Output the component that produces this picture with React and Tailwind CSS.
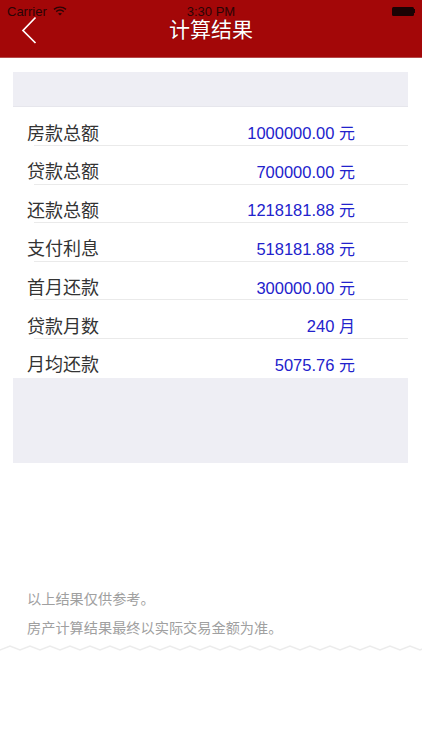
const rows = [
  ["房款总额", "1000000.00", "元"],
  ["贷款总额", "700000.00", "元"],
  ["还款总额", "1218181.88", "元"],
  ["支付利息", "518181.88", "元"],
  ["首月还款", "300000.00", "元"],
  ["贷款月数", "240", "月"],
  ["月均还款", "5075.76", "元"],
];

function Wave() {
  const pts = [];
  for (let x = -10, i = 0; x <= 432; x += 10, i++) pts.push(`${x},${i % 2 ? 6 : 2}`);
  return (
    <svg width="422" height="8" className="block">
      <polyline points={pts.join(" ")} fill="none" stroke="#ececec" strokeWidth="1.6" />
    </svg>
  );
}

export default function App() {
  return (
    <div className="w-[422px] h-[750px] bg-white flex flex-col overflow-hidden font-['Liberation_Sans','Noto_Sans_CJK_SC',sans-serif]">
      <header className="h-[58px] bg-[#a30708] relative shrink-0 border-b border-[#b54a4a]">
        <div className="h-[21px] pt-px px-[7px] flex items-center justify-between text-[13px] leading-none text-[#2a0506] relative">
          <div className="flex items-center gap-[6px]">
            <span>Carrier</span>
            <svg width="14" height="10" viewBox="0 0 14 10" fill="none" stroke="#2a0506" strokeWidth="1.4">
              <path d="M1 3.4C4.5 .4 9.5 .4 13 3.4" />
              <path d="M3.2 5.6C5.4 3.8 8.6 3.8 10.8 5.6" />
              <path d="M7 9.6 5 7.6C6.2 6.7 7.8 6.7 9 7.6Z" fill="#2a0506" stroke="none" />
            </svg>
          </div>
          <span className="absolute left-0 right-0 text-center">3:30 PM</span>
          <div className="flex items-center">
            <div className="w-[22px] h-[9px] bg-[#1a0304] rounded-[1.5px]" />
            <div className="w-[1.5px] h-[4px] bg-[#1a0304]" />
          </div>
        </div>
        <svg width="16" height="28" viewBox="0 0 16 28" fill="none" stroke="white" strokeWidth="1.7" className="absolute left-[21px] top-[16px]">
          <path d="M14.5 1.5 2 14.5 14.5 27" />
        </svg>
        <div className="absolute left-0 right-0 top-[18px] text-center text-[21px] leading-[24px] text-white [text-shadow:0_0_1px_rgba(60,0,0,0.6)]">
          计算结果
        </div>
      </header>

      <main className="w-[395px] ml-[13px] mt-[14px]">
        <div className="h-[35.4px] bg-[#eeeef4] border-b border-[#e6e6ec]" />
        {rows.map(([label, value, unit], i) => (
          <div key={label} className="h-[38.6px] relative flex items-center pl-[14px] pr-[53px] justify-between pt-[14px]">
            <span className="text-[18px] leading-[24px] text-[#333]">{label}</span>
            <span className="text-[16.5px] leading-[24px] text-[#2222cc]">
              {value} <span className="text-[16px]">{unit}</span>
            </span>
            {i < rows.length - 1 && <div className="absolute left-[21px] right-0 bottom-0 h-px bg-[#eaeaea]" />}
          </div>
        ))}
        <div className="h-[85px] bg-[#eeeef4]" />
      </main>

      <div className="mt-[126px] pl-[27px] text-[14.2px] leading-5 text-[#a0a0a0] flex flex-col gap-[9px]">
        <p>以上结果仅供参考。</p>
        <p>房产计算结果最终以实际交易金额为准。</p>
      </div>
      <div className="mt-[6px]"><Wave /></div>
    </div>
  );
}
